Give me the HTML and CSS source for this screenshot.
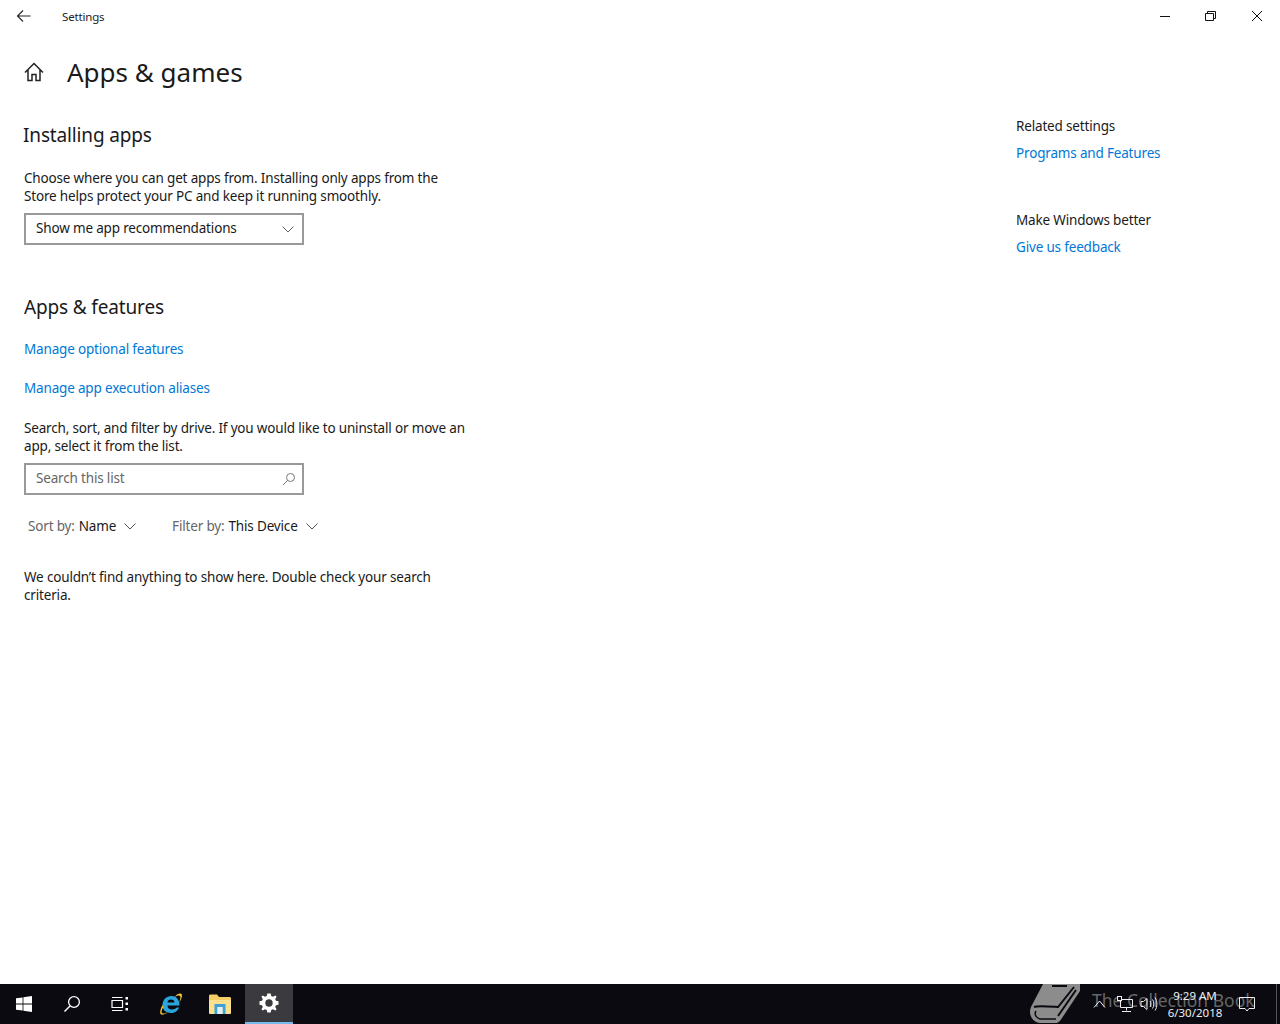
FILE: index.html
```html
<!DOCTYPE html>
<html lang="en">
<head>
    <meta charset="UTF-8">
    <title>Settings</title>
    <link rel="stylesheet" href="styles.css">
</head>
<body>
    <div class="window">
        <div class="titlebar">
            <svg class="back-icon" width="16" height="16" viewBox="0 0 16 16"><path d="M1.5 8H14.5M7 2.5L1.5 8L7 13.5" fill="none" stroke="#222" stroke-width="1.1"/></svg>
            <span class="app-title">Settings</span>
            <div class="window-buttons">
                <svg class="win-btn" width="46" height="32" viewBox="0 0 46 32"><path d="M18 16.5H28" stroke="#111" stroke-width="1"/></svg>
                <svg class="win-btn" width="46" height="32" viewBox="0 0 46 32"><path d="M17.5 13.5H25.5V20.5H17.5ZM19.5 13.5V11.5H27.5V18.5H25.5" fill="none" stroke="#111" stroke-width="1"/></svg>
                <svg class="win-btn" width="46" height="32" viewBox="0 0 46 32"><path d="M18 11L28 21M28 11L18 21" stroke="#111" stroke-width="1"/></svg>
            </div>
        </div>

        <div class="content">
            <div class="main-col">
                <div class="page-head">
                    <svg class="home-icon" width="20" height="20" viewBox="0 0 20 20"><path d="M1 10.5L10 1.5L19 10.5M4 8V18.5H8V12.5H12V18.5H16V8" fill="none" stroke="#222" stroke-width="1.5"/></svg>
                    <h1>Apps &amp; games</h1>
                </div>

                <h2 class="first-head">Installing apps</h2>
                <p class="para">Choose where you can get apps from. Installing only apps from the<br>Store helps protect your PC and keep it running smoothly.</p>
                <div class="field">
                    <span class="field-text">Show me app recommendations</span>
                    <svg class="field-chevron" width="12" height="7" viewBox="0 0 12 7"><path d="M.5 .5L6 6L11.5 .5" fill="none" stroke="#666" stroke-width="1"/></svg>
                </div>

                <h2 class="second-head">Apps &amp; features</h2>
                <a class="link link-optional">Manage optional features</a>
                <a class="link link-alias">Manage app execution aliases</a>
                <p class="para para-search">Search, sort, and filter by drive. If you would like to uninstall or move an<br>app, select it from the list.</p>
                <div class="field">
                    <span class="field-text placeholder">Search this list</span>
                    <svg width="14" height="14" viewBox="0 0 14 14"><circle cx="8.5" cy="5.5" r="4" fill="none" stroke="#777"/><path d="M5.6 8.4L1 13" stroke="#777"/></svg>
                </div>

                <div class="filters">
                    <div class="filter"><span class="filter-label">Sort by:</span> <span>Name</span>
                        <svg width="12" height="7" viewBox="0 0 12 7"><path d="M.5 .5L6 6L11.5 .5" fill="none" stroke="#555"/></svg>
                    </div>
                    <div class="filter"><span class="filter-label">Filter by:</span> <span>This Device</span>
                        <svg width="12" height="7" viewBox="0 0 12 7"><path d="M.5 .5L6 6L11.5 .5" fill="none" stroke="#555"/></svg>
                    </div>
                </div>

                <p class="para para-empty">We couldn’t find anything to show here. Double check your search<br>criteria.</p>
            </div>

            <div class="side-col">
                <p class="side-title">Related settings</p>
                <a class="link side-link">Programs and Features</a>
                <p class="side-title side-second">Make Windows better</p>
                <a class="link side-link">Give us feedback</a>
            </div>
        </div>

        <div class="taskbar">
            <div class="task-item">
                <svg width="16" height="16" viewBox="0 0 16 16"><path d="M0 2.3L6.6 1.4V7.6H0ZM7.4 1.3L16 0V7.6H7.4ZM0 8.4H6.6V14.6L0 13.7ZM7.4 8.4H16V16L7.4 14.7Z" fill="#fff"/></svg>
            </div>
            <div class="task-item">
                <svg width="18" height="18" viewBox="0 0 18 18"><circle cx="11" cy="7" r="5.4" fill="none" stroke="#fff" stroke-width="1.3"/><path d="M7 11L1.5 16.5" stroke="#fff" stroke-width="1.5"/></svg>
            </div>
            <div class="task-item">
                <svg width="18" height="16" viewBox="0 0 18 16"><path d="M1 4.5H11.5V11.5H1ZM1 1.5H11.5M1 14.5H11.5" fill="none" stroke="#fff" stroke-width="1.2"/><path d="M14.5 1H17V3.5H14.5ZM14.5 6.5H17V9H14.5ZM14.5 12H17V14.5H14.5Z" fill="#fff"/></svg>
            </div>
            <div class="task-item task-ie">
                <svg width="24" height="24" viewBox="0 0 24 24">
                    <path d="M3.5 13.5C3.5 7.5 7.5 4 12.5 4C17.5 4 20.5 8 20.5 13.5H8.5C8.5 16.5 11 17.5 13 17.5C15 17.5 16.5 16.8 18 15.5H20C18.5 19.5 15.5 21 12 21C7 21 3.5 18 3.5 13.5ZM8.5 10.5H15.5C15.5 8.5 14 7.5 12 7.5C10 7.5 8.5 8.5 8.5 10.5Z" fill="#2ba6dc"/>
                    <path d="M18 2.5C20.5 1 23 1 23 3.5C23 6 21 9.5 20 11C21 8 22 5 21 4C20 3 18 3.5 15.5 5ZM3.5 13C1.5 17 .5 20 1.5 22C2.8 23.5 6 22.5 8.5 20.5C6.5 21.3 4 22 3 21C2 20 2.8 17 4.5 15Z" fill="#f2c230"/>
                </svg>
            </div>
            <div class="task-item task-folder">
                <svg width="22" height="20" viewBox="0 0 22 20">
                    <path d="M0 2C0 1 .5 .5 1.5 .5H8L10 3H20.5C21.5 3 22 3.5 22 4.5V6H0Z" fill="#f5cf66"/>
                    <path d="M0 6H22V19C22 19.5 21.5 20 21 20H1C.5 20 0 19.5 0 19Z" fill="#fbe08e"/>
                    <path d="M5.5 10H16.5V20H13.5V13H8.5V20H5.5Z" fill="#3ea0d8"/>
                    <path d="M8.5 13H13.5V20H8.5Z" fill="#dff0f9"/>
                </svg>
            </div>
            <div class="task-item active">
                <svg width="20" height="20" viewBox="0 0 20 20"><path fill-rule="evenodd" d="M8.3 .5H11.7L12.2 3L14.1 3.8L16.2 2.4L17.6 3.8L16.2 5.9L17 7.8L19.5 8.3V11.7L17 12.2L16.2 14.1L17.6 16.2L16.2 17.6L14.1 16.2L12.2 17L11.7 19.5H8.3L7.8 17L5.9 16.2L3.8 17.6L2.4 16.2L3.8 14.1L3 12.2L.5 11.7V8.3L3 7.8L3.8 5.9L2.4 3.8L3.8 2.4L5.9 3.8L7.8 3ZM10 6.3A3.7 3.7 0 1 0 10 13.7A3.7 3.7 0 1 0 10 6.3Z" fill="#fff"/></svg>
            </div>

            <div class="watermark">
                <svg width="50" height="40" viewBox="0 0 50 40">
                    <path d="M13 0H50V7L30 37L27 39H10C2 38 -2 30 1 23Z" fill="#8c8c8c"/>
                    <path d="M22 2H37M46 6L28 32M4 23C8 21 26 23 28 23L44 3" fill="none" stroke="#0a0a10" stroke-width="2"/>
                    <path d="M6 27C4 30 6 34 10 35H26" fill="none" stroke="#0a0a10" stroke-width="1.5"/>
                </svg>
                <span>The Collection Book</span>
            </div>

            <div class="tray">
                <svg width="13" height="8" viewBox="0 0 13 8"><path d="M1 7.5L6.5 1L12 7.5" fill="none" stroke="#eee"/></svg>
                <svg class="tray-net" width="16" height="16" viewBox="0 0 16 16"><path d="M3.5 3.5H15.5V11.5H3.5ZM9.5 11.5V14.5M5 15.5H14" fill="none" stroke="#eee"/><rect x=".5" y=".5" width="4" height="4" fill="#0a0a10" stroke="#eee"/></svg>
                <svg class="tray-sound" width="18" height="16" viewBox="0 0 18 16"><path d="M1 5.5H3.5L7 2.5V13.5L3.5 10.5H1Z" fill="none" stroke="#eee"/><path d="M10 5C11 6.5 11 9.5 10 11M12.5 3.5C14.3 6 14.3 10 12.5 12.5M15 1.5C17.5 5 17.5 11 15 14.5" fill="none" stroke="#eee"/></svg>
                <div class="clock"><span>9:29 AM</span><span>6/30/2018</span></div>
                <svg class="tray-note" width="16" height="16" viewBox="0 0 16 16"><path d="M.5 1.5H15.5V12.5H10L8 15L6 12.5H.5Z" fill="none" stroke="#eee"/></svg>
                <div class="show-desktop"></div>
            </div>
        </div>
    </div>
</body>
</html>
```

FILE: styles.css
```css
* {
    box-sizing: border-box;
}

body {
    margin: 0;
    font-family: "Noto Sans", "Open Sans", sans-serif;
    font-size: 13.5px;
    letter-spacing: -0.17px;
    color: #1a1a1a;
    background-color: #fff;
}

.window {
    display: flex;
    flex-direction: column;
    height: 1024px;
    overflow: hidden;
}

.titlebar {
    display: flex;
    align-items: center;
    height: 32px;
    flex-shrink: 0;
}

.back-icon {
    margin-left: 16px;
}

.app-title {
    margin-left: 30px;
    font-size: 11.5px;
    color: #222;
}

.window-buttons {
    display: flex;
    margin-left: auto;
}

.win-btn {
    display: block;
}

.content {
    display: flex;
    flex: 1;
}

.main-col {
    width: 1016px;
    padding-left: 24px;
}

.page-head {
    display: flex;
    align-items: center;
    height: 40px;
    margin-top: 20px;
}

.home-icon {
    flex-shrink: 0;
}

h1 {
    margin: 0 0 0 23px;
    font-size: 26px;
    font-weight: 400;
    letter-spacing: 0;
    line-height: 40px;
}

h2 {
    margin: 0;
    font-size: 19px;
    font-weight: 400;
    letter-spacing: -0.15px;
    line-height: 28px;
}

.first-head {
    margin-top: 29px;
    margin-left: -1px;
}

.second-head {
    margin-top: 48px;
}

.para {
    margin: 0;
    line-height: 18px;
}

.first-head + .para {
    margin-top: 20px;
}

.field {
    display: flex;
    align-items: center;
    justify-content: space-between;
    width: 280px;
    height: 32px;
    margin-top: 8px;
    padding: 0 6px 0 10px;
    border: 2px solid #999;
}

.field-text {
    margin-top: -2px;
}

.field-chevron {
    margin-right: 2px;
}

.placeholder {
    color: #666;
}

.link {
    display: block;
    color: #0078d7;
    line-height: 18px;
}

.link-optional {
    margin-top: 19px;
}

.link-alias {
    margin-top: 21px;
}

.para-search {
    margin-top: 22px;
}

.filters {
    display: flex;
    gap: 36px;
    margin-top: 22px;
    margin-left: 4px;
}

.filter {
    display: flex;
    align-items: center;
    gap: 4px;
    line-height: 18px;
}

.filter svg {
    margin-left: 4px;
}

.filter-label {
    color: #666;
}

.para-empty {
    margin-top: 33px;
}

.side-col {
    padding-top: 85px;
}

.side-title {
    margin: 0;
    line-height: 18px;
}

.side-second {
    margin-top: 49px;
}

.side-link {
    margin-top: 9px;
}

.taskbar {
    position: relative;
    display: flex;
    height: 40px;
    flex-shrink: 0;
    background-color: #0a0a10;
}

.task-item {
    display: flex;
    align-items: center;
    justify-content: center;
    width: 48px;
    height: 40px;
}

.task-ie {
    margin-left: 3px;
}

.task-folder {
    margin-left: 1px;
}

.task-item.active {
    margin-left: 1px;
    background-color: #3b3b3f;
    border-bottom: 2px solid #76b9ed;
}

.tray {
    position: relative;
    display: flex;
    align-items: center;
    margin-left: auto;
    color: #eee;
    font-size: 11.5px;
    letter-spacing: 0;
}

.tray-net {
    margin-left: 11px;
}

.tray-sound {
    margin-left: 7px;
}

.clock {
    display: flex;
    flex-direction: column;
    align-items: center;
    width: 70px;
    margin-left: 2px;
    line-height: 17px;
}

.tray-note {
    margin-left: 9px;
}

.show-desktop {
    width: 1px;
    height: 40px;
    margin-left: 21px;
    margin-right: 3px;
    background-color: #555;
}

.watermark {
    position: absolute;
    left: 1030px;
    top: 0;
    display: flex;
    align-items: center;
    gap: 12px;
    height: 40px;
    color: #666;
    font-size: 17.5px;
    letter-spacing: 0;
    pointer-events: none;
}

.watermark span {
    margin-top: -8px;
}
```
